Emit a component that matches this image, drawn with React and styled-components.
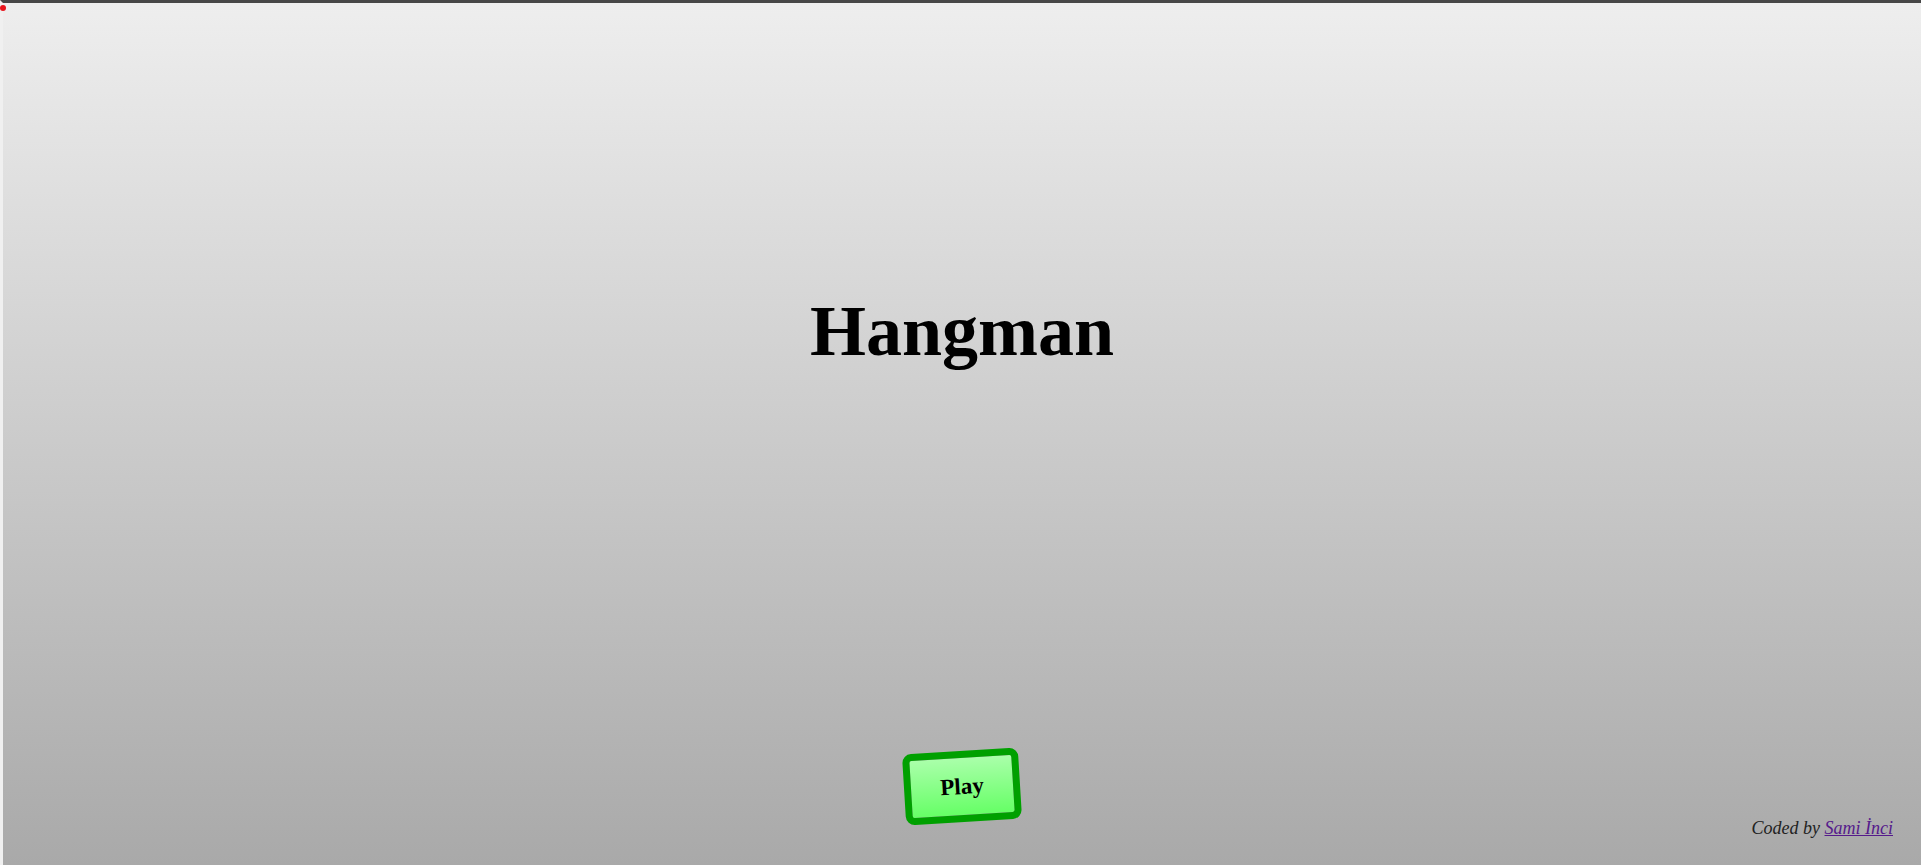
import React from "react";
import styled, { createGlobalStyle } from "styled-components";

const GlobalStyle = createGlobalStyle`
  html, body {
    margin: 0;
    padding: 0;
  }
  body {
    font-family: "Liberation Serif", "Times New Roman", serif;
    overflow: hidden;
  }
`;

const Page = styled.div`
  position: relative;
  box-sizing: border-box;
  height: 100vh;
  display: flex;
  flex-direction: column;
  border-top: 3px solid #474747;
  border-left: 3px solid #f0f0f0;
  background: linear-gradient(#eeeeee, #a9a9a9);
`;

const Dot = styled.span`
  position: absolute;
  top: 2px;
  left: -3px;
  width: 6px;
  height: 6px;
  border-radius: 50%;
  background: #e8141c;
`;

const Title = styled.h1`
  margin: 287px 0 0;
  text-align: center;
  font-size: 72px;
  font-weight: 700;
  color: #000;
`;

const Spacer = styled.div`
  flex: 1;
`;

const BottomRow = styled.div`
  display: grid;
  grid-template-columns: 1fr auto 1fr;
  align-items: end;
  padding-bottom: 26px;
`;

const PlayButton = styled.button`
  grid-column: 2;
  box-sizing: border-box;
  width: 116px;
  height: 71px;
  margin-bottom: 17px;
  border: 7px solid #00a000;
  border-radius: 9px;
  background: linear-gradient(#aaffaa, #66ff66);
  font-family: "Liberation Serif", "Times New Roman", serif;
  font-size: 23px;
  font-weight: 700;
  color: #000;
  transform: rotate(-3.5deg);
  cursor: pointer;
`;

const Credit = styled.p`
  grid-column: 3;
  justify-self: end;
  margin: 0 28px 0 0;
  font-size: 18px;
  font-style: italic;
  color: #222;
`;

const CreditLink = styled.a`
  color: #551a8b;
`;

const App = () => {
  return (
    <Page>
      <GlobalStyle />
      <Dot />
      <Title>Hangman</Title>
      <Spacer />
      <BottomRow>
        <PlayButton>Play</PlayButton>
        <Credit>
          Coded by <CreditLink href="#">Sami İnci</CreditLink>
        </Credit>
      </BottomRow>
    </Page>
  );
};

export default App;
